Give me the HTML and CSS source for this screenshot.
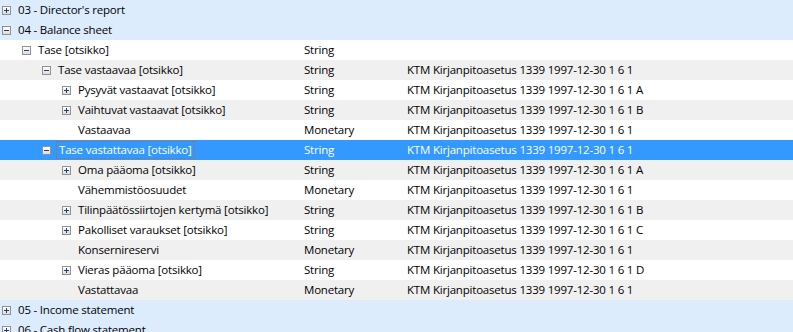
FILE: index.html
```html
<!DOCTYPE html>
<html lang="en">
<head>
    <meta charset="UTF-8">
    <title>Report tree</title>
    <link rel="stylesheet" href="styles.css">
</head>
<body>
    <div class="tree">
        <div class="row group">
            <div class="name lvl0"><span class="toggle plus"></span><span class="label">03 - Director's report</span></div>
        </div>
        <div class="row group">
            <div class="name lvl0"><span class="toggle minus"></span><span class="label">04 - Balance sheet</span></div>
        </div>
        <div class="row">
            <div class="name lvl1"><span class="toggle minus"></span><span class="label">Tase [otsikko]</span></div>
            <div class="type">String</div>
            <div class="source"></div>
        </div>
        <div class="row alt">
            <div class="name lvl2"><span class="toggle minus"></span><span class="label">Tase vastaavaa [otsikko]</span></div>
            <div class="type">String</div>
            <div class="source">KTM Kirjanpitoasetus 1339 1997-12-30 1 6 1</div>
        </div>
        <div class="row">
            <div class="name lvl3"><span class="toggle plus"></span><span class="label">Pysyvät vastaavat [otsikko]</span></div>
            <div class="type">String</div>
            <div class="source">KTM Kirjanpitoasetus 1339 1997-12-30 1 6 1 A</div>
        </div>
        <div class="row alt">
            <div class="name lvl3"><span class="toggle plus"></span><span class="label">Vaihtuvat vastaavat [otsikko]</span></div>
            <div class="type">String</div>
            <div class="source">KTM Kirjanpitoasetus 1339 1997-12-30 1 6 1 B</div>
        </div>
        <div class="row">
            <div class="name lvl3"><span class="toggle none"></span><span class="label">Vastaavaa</span></div>
            <div class="type">Monetary</div>
            <div class="source">KTM Kirjanpitoasetus 1339 1997-12-30 1 6 1</div>
        </div>
        <div class="row selected">
            <div class="name lvl2"><span class="toggle minus"></span><span class="label focus">Tase vastattavaa [otsikko]</span></div>
            <div class="type">String</div>
            <div class="source">KTM Kirjanpitoasetus 1339 1997-12-30 1 6 1</div>
        </div>
        <div class="row alt">
            <div class="name lvl3"><span class="toggle plus"></span><span class="label">Oma pääoma [otsikko]</span></div>
            <div class="type">String</div>
            <div class="source">KTM Kirjanpitoasetus 1339 1997-12-30 1 6 1 A</div>
        </div>
        <div class="row">
            <div class="name lvl3"><span class="toggle none"></span><span class="label">Vähemmistöosuudet</span></div>
            <div class="type">Monetary</div>
            <div class="source">KTM Kirjanpitoasetus 1339 1997-12-30 1 6 1</div>
        </div>
        <div class="row alt">
            <div class="name lvl3"><span class="toggle plus"></span><span class="label">Tilinpäätössiirtojen kertymä [otsikko]</span></div>
            <div class="type">String</div>
            <div class="source">KTM Kirjanpitoasetus 1339 1997-12-30 1 6 1 B</div>
        </div>
        <div class="row">
            <div class="name lvl3"><span class="toggle plus"></span><span class="label">Pakolliset varaukset [otsikko]</span></div>
            <div class="type">String</div>
            <div class="source">KTM Kirjanpitoasetus 1339 1997-12-30 1 6 1 C</div>
        </div>
        <div class="row alt">
            <div class="name lvl3"><span class="toggle none"></span><span class="label">Konsernireservi</span></div>
            <div class="type">Monetary</div>
            <div class="source">KTM Kirjanpitoasetus 1339 1997-12-30 1 6 1</div>
        </div>
        <div class="row">
            <div class="name lvl3"><span class="toggle plus"></span><span class="label">Vieras pääoma [otsikko]</span></div>
            <div class="type">String</div>
            <div class="source">KTM Kirjanpitoasetus 1339 1997-12-30 1 6 1 D</div>
        </div>
        <div class="row alt">
            <div class="name lvl3"><span class="toggle none"></span><span class="label">Vastattavaa</span></div>
            <div class="type">Monetary</div>
            <div class="source">KTM Kirjanpitoasetus 1339 1997-12-30 1 6 1</div>
        </div>
        <div class="row group">
            <div class="name lvl0"><span class="toggle plus"></span><span class="label">05 - Income statement</span></div>
        </div>
        <div class="row group">
            <div class="name lvl0"><span class="toggle plus"></span><span class="label">06 - Cash flow statement</span></div>
        </div>
    </div>
</body>
</html>
```

FILE: styles.css
```css
body {
    margin: 0;
    background-color: #ffffff;
    color: #000000;
    font-family: "Open Sans", "Noto Sans", sans-serif;
    font-size: 11.5px;
    letter-spacing: -0.2px;
    overflow: hidden;
}
.tree {
    width: 793px;
}
.row {
    display: grid;
    grid-template-columns: 304px 103px 1fr;
    height: 20px;
    line-height: 20px;
    background-color: #ffffff;
    white-space: nowrap;
}
.row.alt {
    background-color: #f0f0f0;
}
.row.group {
    background-color: #ddecfd;
    grid-template-columns: 1fr;
}
.row.selected {
    background-color: #3399ff;
    color: #ffffff;
}
.name {
    display: flex;
    align-items: center;
    overflow: hidden;
}
.lvl0 { padding-left: 2px; }
.lvl1 { padding-left: 22px; }
.lvl2 { padding-left: 42px; }
.lvl3 { padding-left: 62px; }

/* expand / collapse box */
.toggle {
    position: relative;
    box-sizing: border-box;
    width: 9px;
    height: 9px;
    margin-right: 7px;
    border: 1px solid #919191;
    background: linear-gradient(#ffffff, #dcdcdc);
    flex: none;
}
.toggle.none {
    border: none;
    background: none;
}
.toggle.plus::before,
.toggle.minus::before {
    content: "";
    position: absolute;
    left: 1px;
    top: 3px;
    width: 5px;
    height: 1px;
    background-color: #1e3f73;
}
.toggle.plus::after {
    content: "";
    position: absolute;
    left: 3px;
    top: 1px;
    width: 1px;
    height: 5px;
    background-color: #1e3f73;
}
.label {
    line-height: 16px;
    padding: 0 1px;
    margin-left: -1px;
}
.label.focus {
    outline: 1px dotted #b8682e;
    outline-offset: 0;
    line-height: 16px;
    padding: 0 2px;
}
.type, .source {
    overflow: hidden;
}
```
